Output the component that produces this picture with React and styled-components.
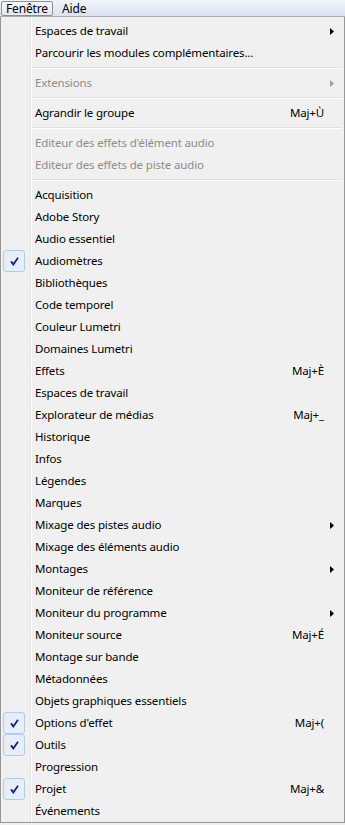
import React from "react";
import styled, { createGlobalStyle } from "styled-components";

const GlobalStyle = createGlobalStyle`
  html, body {
    margin: 0;
    padding: 0;
    background: #f0f0f0;
  }
  body {
    font-family: "Segoe UI", "Noto Sans", "Liberation Sans", sans-serif;
    font-size: 11.5px;
    letter-spacing: -0.15px;
    color: #000;
  }
`;

const Page = styled.div`
  width: 345px;
  height: 825px;
  overflow: hidden;
`;

const MenuBar = styled.div`
  display: flex;
  align-items: center;
  gap: 4px;
  height: 16px;
  padding-left: 1px;
  background: linear-gradient(#f1f4fa, #dae2f0);
  border-bottom: 1px solid #a9adb7;
`;

const BarButton = styled.div`
  display: flex;
  align-items: center;
  height: 15px;
  padding: 0 4px;
  box-sizing: border-box;
  border: 1px solid ${(p) => (p.$open ? "#8d8f93" : "transparent")};
  border-radius: 2px;
  background: ${(p) =>
    p.$open ? "linear-gradient(#f5f7fb, #e3e8f1)" : "transparent"};
  line-height: 13px;
  font-size: 12px;
`;

const Panel = styled.div`
  width: 345px;
  box-sizing: border-box;
  border: 1px solid #979797;
  border-top: none;
  padding: 3px 2px 0 2px;
  background-color: #f0f0f0;
  background-image: linear-gradient(
    to right,
    transparent 29px,
    #e2e3e3 29px,
    #e2e3e3 30px,
    #ffffff 30px,
    #ffffff 31px,
    transparent 31px
  );
  display: flex;
  flex-direction: column;
`;

const Item = styled.div`
  display: grid;
  grid-template-columns: 32px 1fr auto 18px;
  align-items: center;
  height: 22px;
  line-height: 22px;
  color: ${(p) => (p.$disabled ? "#8d8d8d" : "#000")};
  white-space: nowrap;
`;

const CheckCell = styled.div`
  display: flex;
  align-items: center;
  height: 22px;
`;

const CheckBox = styled.div`
  width: 22px;
  height: 22px;
  box-sizing: border-box;
  border: 1px solid #aeccec;
  border-radius: 3px;
  background: #e6eef8;
  display: flex;
  align-items: center;
  justify-content: center;
`;

const Label = styled.span``;

const Shortcut = styled.span`
  text-align: right;
  padding-left: 20px;
`;

const Arrow = styled.span`
  display: flex;
  justify-content: flex-start;
  padding-left: 6px;
`;

const Separator = styled.div`
  height: 8px;
  margin-left: 29px;
  display: flex;
  flex-direction: column;
  justify-content: center;

  &::before {
    content: "";
    display: block;
    height: 1px;
    background: #e0e0e0;
  }
  &::after {
    content: "";
    display: block;
    height: 1px;
    background: #ffffff;
  }
`;

const Check = () => (
  <svg width="9" height="9" viewBox="0 0 9 9">
    <path
      d="M1 4.4 L3.3 7.4 L8 0.8"
      fill="none"
      stroke="#1a1a86"
      strokeWidth="1.8"
    />
  </svg>
);

const Triangle = ({ disabled }) => (
  <svg width="4" height="7" viewBox="0 0 4 7">
    <path d="M0 0 L4 3.5 L0 7 Z" fill={disabled ? "#a0a0a0" : "#000"} />
  </svg>
);

const menu = [
  { label: "Espaces de travail", sub: true },
  { label: "Parcourir les modules complémentaires..." },
  "sep",
  { label: "Extensions", sub: true, disabled: true },
  "sep",
  { label: "Agrandir le groupe", key: "Maj+Ù" },
  "sep",
  { label: "Editeur des effets d'élément audio", disabled: true },
  { label: "Editeur des effets de piste audio", disabled: true },
  "sep",
  { label: "Acquisition" },
  { label: "Adobe Story" },
  { label: "Audio essentiel" },
  { label: "Audiomètres", checked: true },
  { label: "Bibliothèques" },
  { label: "Code temporel" },
  { label: "Couleur Lumetri" },
  { label: "Domaines Lumetri" },
  { label: "Effets", key: "Maj+È" },
  { label: "Espaces de travail" },
  { label: "Explorateur de médias", key: "Maj+_" },
  { label: "Historique" },
  { label: "Infos" },
  { label: "Légendes" },
  { label: "Marques" },
  { label: "Mixage des pistes audio", sub: true },
  { label: "Mixage des éléments audio" },
  { label: "Montages", sub: true },
  { label: "Moniteur de référence" },
  { label: "Moniteur du programme", sub: true },
  { label: "Moniteur source", key: "Maj+É" },
  { label: "Montage sur bande" },
  { label: "Métadonnées" },
  { label: "Objets graphiques essentiels" },
  { label: "Options d'effet", key: "Maj+(", checked: true },
  { label: "Outils", checked: true },
  { label: "Progression" },
  { label: "Projet", key: "Maj+&", checked: true },
  { label: "Événements" },
];

const App = () => {
  return (
    <Page>
      <GlobalStyle />
      <MenuBar>
        <BarButton $open>Fenêtre</BarButton>
        <BarButton>Aide</BarButton>
      </MenuBar>
      <Panel>
        {menu.map((m, i) =>
          m === "sep" ? (
            <Separator key={i} />
          ) : (
            <Item key={i} $disabled={m.disabled}>
              <CheckCell>
                {m.checked && (
                  <CheckBox>
                    <Check />
                  </CheckBox>
                )}
              </CheckCell>
              <Label>{m.label}</Label>
              <Shortcut>{m.key}</Shortcut>
              <Arrow>{m.sub && <Triangle disabled={m.disabled} />}</Arrow>
            </Item>
          )
        )}
      </Panel>
    </Page>
  );
};

export default App;
